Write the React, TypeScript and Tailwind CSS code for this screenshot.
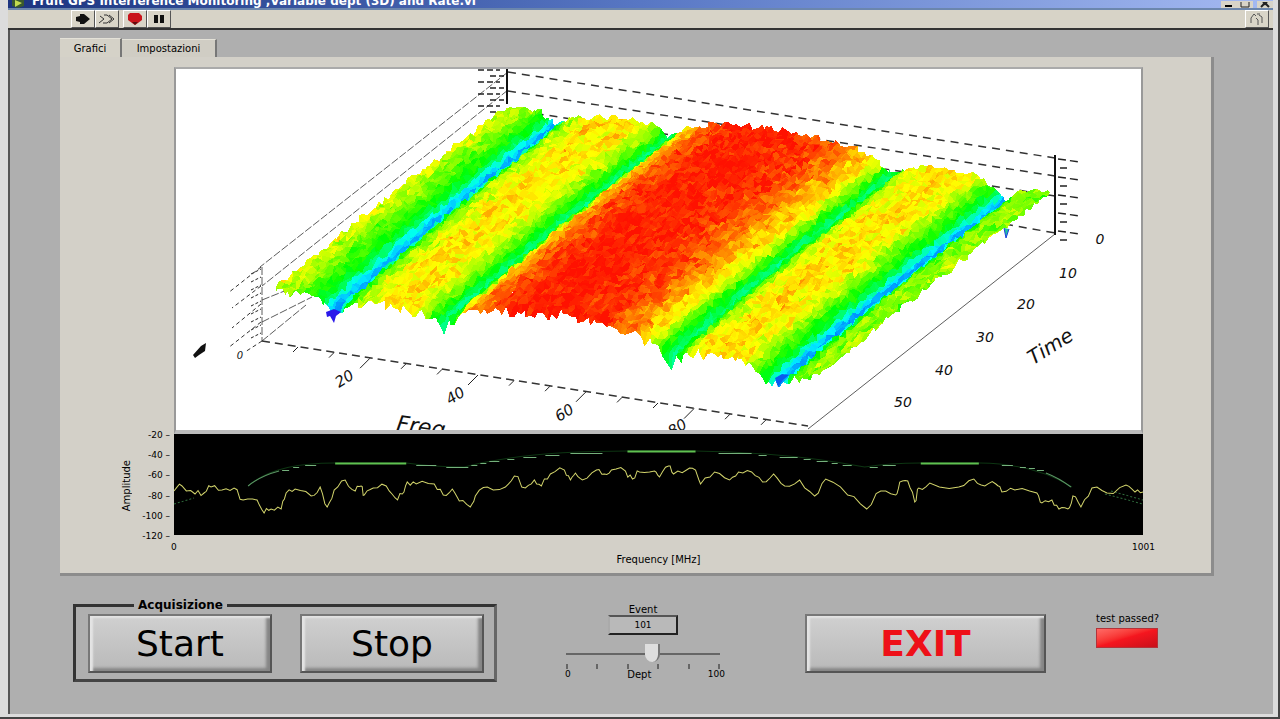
import { useState } from 'react';

type Point = [number, number];

// front x, front y, back x, back y, hue, noise
const SECTIONS: number[][] = [
  [274, 289, 508, 106, 68, 18],
  [292, 292, 528, 108, 86, 20],
  [312, 295, 540, 112, 110, 12],
  [321, 301, 547, 117, 130, 10],
  [326, 306, 551, 121, 176, 5],
  [331, 309, 554, 124, 196, 6],
  [337, 310, 558, 125, 212, 6],
  [342, 307, 562, 124, 124, 12],
  [356, 304, 572, 118, 80, 20],
  [382, 304, 600, 117, 52, 16],
  [412, 310, 640, 120, 60, 16],
  [426, 314, 657, 127, 90, 14],
  [434, 319, 664, 134, 122, 8],
  [444, 322, 670, 138, 156, 8],
  [452, 319, 676, 136, 112, 14],
  [462, 313, 688, 129, 46, 14],
  [482, 309, 710, 124, 22, 16],
  [512, 309, 740, 125, 8, 10],
  [560, 314, 780, 130, 7, 10],
  [604, 324, 824, 139, 14, 16],
  [634, 331, 858, 149, 36, 18],
  [650, 339, 876, 161, 60, 12],
  [660, 349, 886, 169, 112, 10],
  [670, 356, 893, 174, 154, 10],
  [679, 354, 902, 172, 112, 12],
  [692, 350, 914, 167, 64, 18],
  [718, 354, 945, 169, 50, 16],
  [744, 361, 976, 176, 64, 18],
  [757, 368, 989, 184, 104, 14],
  [766, 376, 996, 191, 128, 10],
  [770, 379, 1000, 196, 174, 8],
  [775, 381, 1003, 200, 196, 6],
  [781, 382, 1007, 201, 212, 6],
  [786, 380, 1010, 200, 130, 12],
  [798, 378, 1024, 190, 86, 20],
  [820, 375, 1053, 191, 88, 24],
];

const NOTCHES: Point[] = [
  [334, 8],
  [443, 6],
  [669, 8],
  [779, 5],
];

const COLUMNS = 160;
const ROWS = 70;

function createRandom(seed: number) {
  let state = seed;
  return () => {
    state = (state * 1664525 + 1013904223) % 4294967296;
    return state / 4294967296;
  };
}

function sampleSection(s: number) {
  const x = 274 + s * (820 - 274);
  let i = 0;
  while (i < SECTIONS.length - 2 && SECTIONS[i + 1][0] < x) i++;
  const a = SECTIONS[i];
  const b = SECTIONS[i + 1];
  const k = (x - a[0]) / (b[0] - a[0]);
  return a.map((value, index) => value + (b[index] - value) * k);
}

function buildSurface() {
  const random = createRandom(71);
  const grid: Point[][] = [];
  const hues: number[][] = [];

  for (let r = 0; r <= ROWS; r++) {
    const t = r / ROWS;
    const points: Point[] = [];
    const rowHues: number[] = [];
    for (let c = 0; c <= COLUMNS; c++) {
      const [fx, fy, bx, by, hue, noise] = sampleSection(c / COLUMNS);
      const edge = r === ROWS ? random() * 10 - 3 : 0;
      const notch = r === ROWS ? NOTCHES.find(([x]) => Math.abs(x - fx) < 5) : undefined;
      const x = bx + (fx - bx) * t + (random() - 0.5) * 4;
      const bow = Math.sin(Math.PI * t) * -3;
      const y = by + (fy - by) * t + bow + (random() - 0.5) * 7 + edge + (notch ? notch[1] : 0);
      points.push([Math.round(x * 10) / 10, Math.round(y * 10) / 10]);
      rowHues.push(hue + (random() + random() - 1) * noise * 1.8);
    }
    grid.push(points);
    hues.push(rowHues);
  }

  const cells: { points: string; fill: string }[] = [];
  for (let r = 0; r < ROWS; r++) {
    for (let c = 0; c < COLUMNS; c++) {
      const corners = [grid[r][c], grid[r][c + 1], grid[r + 1][c + 1], grid[r + 1][c]];
      const hue = (hues[r][c] * 2 + hues[r][c + 1] + hues[r + 1][c]) / 4;
      cells.push({
        points: corners.map((p) => p.join(',')).join(' '),
        fill: `hsl(${Math.round(Math.max(4, hue))} 100% 50%)`,
      });
    }
  }
  return cells;
}

const SURFACE = buildSurface();

const TIME_LABELS = [
  { x: 1100, y: 244, text: '0' },
  { x: 1068, y: 278, text: '10' },
  { x: 1026, y: 309, text: '20' },
  { x: 985, y: 342, text: '30' },
  { x: 944, y: 375, text: '40' },
  { x: 903, y: 407, text: '50' },
];

const FREQ_LABELS = [
  { x: 347, y: 383, text: '20' },
  { x: 458, y: 400, text: '40' },
  { x: 567, y: 417, text: '60' },
  { x: 680, y: 432, text: '80' },
];

function SurfaceChart() {
  return (
    <svg
      viewBox="176 69 965 361"
      preserveAspectRatio="none"
      className="block h-[361px] w-full bg-white"
      role="img"
      aria-label="Spectrum over time"
    >
      <g stroke="#333" strokeWidth="1" fill="none">
        <path d="M508 72L260 267M508 90L262 286M262 267V341M262 300L302 284M262 322L312 297M262 341L306 305" strokeDasharray="8 2" strokeWidth="0.8" />
        <path d="M261 267L228 293M261 286L232 308M261 304L232 328M261 322L228 348M262 341L245 352" strokeDasharray="4 3" />
        <path d="M262 341L808 426" strokeDasharray="8 5" strokeWidth="1.5" />
        <path d="M508 72L1055 158M508 91L1055 176M508 109L1055 196M1005 224L1055 233" strokeDasharray="8 6" strokeWidth="1.5" />
        <path d="M1055 234L808 429" strokeWidth="0.8" />
      </g>
      <path d="M507 69V104M1055 155V235" stroke="#111" strokeWidth="2" />
      <g stroke="#222" strokeWidth="1.5">
        {[0, 1, 2, 3, 4].map((i) => (
          <path key={i} d={`M1058 ${159 + i * 18}l22 3M1060 ${168 + i * 18}h7`} strokeDasharray="8 4" />
        ))}
        {[0, 1, 2, 3, 4, 5, 6, 7].map((i) => (
          <path key={i} d={`M${i % 2 ? 490 : 478} ${70 + i * 6}h${i % 2 ? 14 : 22}`} strokeDasharray="6 3" />
        ))}
        {[0, 1, 2, 3, 4, 5, 6, 7, 8].map((i) => (
          <path key={i} d={`M251 ${274 + i * 8}l10 -5`} strokeWidth="1" strokeDasharray="3 2" />
        ))}
        {Array.from({ length: 14 }, (_, i) => (
          <path key={i} d={`M${298 + i * 36} ${347 + i * 5.6}l${(i + 1) % 3 ? '-5 5' : '-10 10'}`} strokeWidth="1" />
        ))}
      </g>
      <g shapeRendering="crispEdges">
        {SURFACE.map((cell, i) => (
          <polygon key={i} points={cell.points} fill={cell.fill} />
        ))}
      </g>
      <path d="M326 312l1 5 3 -1 4 7 2 -7 5 -4 -7 -3z" fill="#2a18ea" />
      <path d="M775 378l3 9 5 -7 6 -5 -7 -1z" fill="#0a5cf0" />
      <path d="M1004 228l2 10 3 -9" stroke="#2040e0" strokeWidth="1" fill="#20c0a0" />
      <g fontFamily="'DejaVu Sans', sans-serif" fontStyle="italic" textAnchor="middle" fill="#111">
        {TIME_LABELS.map((label) => (
          <text key={label.text} x={label.x} y={label.y} fontSize="14">
            {label.text}
          </text>
        ))}
        {FREQ_LABELS.map((label) => (
          <text key={label.text} x={label.x} y={label.y} fontSize="15" transform={`rotate(-32 ${label.x} ${label.y})`}>
            {label.text}
          </text>
        ))}
        <text x="240" y="359" fontSize="10">0</text>
        <text x="1054" y="352" fontSize="20" transform="rotate(-32 1054 352)">Time</text>
        <text x="420" y="434" fontSize="22" transform="rotate(8 420 434)">Freq</text>
      </g>
      <path d="M193 355l8 -9 5 -3 -1 8 -6 4 -4 3z" fill="#111" />
    </svg>
  );
}

// amplitude trace, y values inside the 968 x 101 plot
const TRACE_KEYS: Point[] = [
  [0, 57], [8, 52], [21, 60], [30, 59], [37, 53], [48, 56], [60, 54], [69, 66], [83, 66], [90, 79],
  [97, 75], [107, 75], [112, 59], [121, 55], [137, 62], [146, 53], [153, 73], [160, 56], [171, 46], [181, 57],
  [187, 52], [190, 61], [199, 54], [212, 52], [221, 64], [228, 60], [233, 48], [242, 50], [260, 50], [269, 61],
  [278, 55], [285, 67], [296, 73], [301, 62], [313, 53], [331, 53], [340, 42], [351, 54], [360, 46], [367, 52],
  [376, 40], [390, 36], [396, 46], [401, 39], [408, 46], [422, 36], [430, 40], [437, 36], [451, 37], [458, 45],
  [465, 38], [480, 37], [485, 43], [494, 32], [499, 40], [512, 36], [521, 36], [526, 50], [540, 38], [555, 46],
  [564, 38], [577, 38], [588, 48], [599, 40], [610, 52], [625, 46], [640, 62], [651, 45], [673, 61], [692, 75],
  [706, 57], [721, 61], [725, 48], [733, 47], [740, 68], [744, 54], [755, 49], [784, 53], [799, 45], [810, 52],
  [821, 50], [827, 58], [840, 56], [862, 59], [867, 69], [877, 66], [884, 75], [893, 75], [898, 62], [906, 73],
  [917, 54], [932, 59], [951, 51], [960, 58], [968, 58],
];

function buildTrace() {
  const random = createRandom(19);
  const parts: string[] = [];
  TRACE_KEYS.forEach(([x, y], i) => {
    parts.push(`${i ? 'L' : 'M'}${x} ${y}`);
    const next = TRACE_KEYS[i + 1];
    if (!next) return;
    [0.33, 0.67].forEach((k) => {
      const px = x + (next[0] - x) * k;
      const py = y + (next[1] - y) * k + (random() - 0.5) * 7;
      parts.push(`L${px.toFixed(1)} ${py.toFixed(1)}`);
    });
  });
  return parts.join('');
}

const TRACE = buildTrace();

// limit mask: x, y, length of each flat piece
const MASK_DASHES: number[][] = [
  [108, 36, 7], [119, 33, 6], [131, 31, 11], [242, 31, 20], [272, 33, 22], [297, 31, 6], [306, 29, 6],
  [315, 27, 10], [333, 25, 7], [349, 23, 13], [371, 21, 14], [396, 19, 32], [544, 19, 33], [584, 21, 8],
  [605, 23, 18], [629, 25, 7], [642, 27, 11], [657, 29, 6], [668, 31, 9], [695, 33, 8], [708, 31, 13],
  [827, 31, 11], [845, 33, 6], [854, 34, 6], [862, 36, 7],
];

function AmplitudeChart() {
  return (
    <svg viewBox="0 0 968 101" preserveAspectRatio="none" className="block h-[101px] w-full bg-black" role="img" aria-label="Amplitude">
      <path
        d="M74 52Q100 29 160 29H232Q260 33 290 33Q350 17 453 17H521Q610 18 690 33Q715 29 746 29H805Q860 30 897 53"
        fill="none"
        stroke="#0d3512"
        strokeWidth="1"
      />
      <path d="M74 52Q86 42 105 37M871 39Q884 44 896 53" fill="none" stroke="#5a9463" />
      {MASK_DASHES.map(([x, y, length]) => (
        <path key={x} d={`M${x} ${y + 0.5}h${length}`} stroke="#75b07c" />
      ))}
      <path d="M161 29.500H232M453 17.500H521M746 29.500H804" stroke="#5fc050" strokeWidth="2" />
      <path d="M0 70L20 64M930 60L968 70M936 57L968 66" stroke="#2f6b3c" strokeDasharray="2 2" />
      <path d={TRACE} fill="none" stroke="#d3d56c" strokeWidth="1" />
    </svg>
  );
}

const TOOL_BUTTON =
  'flex h-[18px] w-6 items-center justify-center border border-t-white border-l-white border-r-[#555] border-b-[#555] bg-[#d9d5c8]';

function Toolbar() {
  return (
    <div className="flex h-[20px] items-center justify-between border-b-2 border-[#333] bg-[#d7d3c7] pr-1 pl-[63px]">
      <div className="flex items-center">
        <button type="button" aria-label="Run" className={TOOL_BUTTON}>
          <svg viewBox="0 0 16 12" className="h-3 w-4">
            <path d="M1 4l4-1V1h4l6 5-6 5H5V9L1 8z" fill="#111" />
          </svg>
        </button>
        <button type="button" aria-label="Run continuously" className={TOOL_BUTTON}>
          <svg viewBox="0 0 18 12" className="h-3 w-[18px]" fill="none" stroke="#333">
            <path d="M2 3l4 3-5 4M6 2h3l5 4-5 4H5M11 2l5 4-5 4" />
          </svg>
        </button>
        <button type="button" aria-label="Abort" className={`${TOOL_BUTTON} ml-1`}>
          <svg viewBox="0 0 16 12" className="h-3 w-4">
            <path d="M3 0h9l3 3v4l-4 3-3 2-3-2-4-3V2z" fill="#c9141b" />
            <path d="M5 9l3 3 3-3z" fill="#5c1010" />
          </svg>
        </button>
        <button type="button" aria-label="Pause" className={TOOL_BUTTON}>
          <svg viewBox="0 0 12 10" className="h-[10px] w-3">
            <path d="M1 1h4v8H1zM7 1h4v8H7z" fill="#111" />
          </svg>
        </button>
      </div>
      <button type="button" aria-label="VI icon" className={TOOL_BUTTON}>
        <svg viewBox="0 0 16 14" className="h-[14px] w-4" fill="none" stroke="#555">
          <path d="M2 11V6l3-4 2 2M10 3l3 2v6M7 6l2 2v5M8 2h3" />
        </svg>
      </button>
    </div>
  );
}

interface PanelButtonProps {
  label: string;
  className: string;
  onClick?: () => void;
}

function PanelButton({ label, className, onClick }: PanelButtonProps) {
  return (
    <button
      type="button"
      onClick={onClick}
      className={`flex h-[59px] items-center justify-center border-2 border-t-[#777] border-l-[#777] border-r-[#555] border-b-[#555] bg-linear-to-b from-[#d0d0d0] to-[#b9b9b9] shadow-[inset_3px_2px_2px_#e4e4e4,inset_-4px_-3px_3px_#858585] ${className}`}
    >
      {label}
    </button>
  );
}

export default function App() {
  const [tab, setTab] = useState('Grafici');
  const [depth, setDepth] = useState(57);

  return (
    <div className="flex min-h-screen flex-col border-r-2 border-b-2 border-[#444] bg-[#dcdcdc] pr-[5px] pb-[3px] pl-[8px] font-['DejaVu_Sans',sans-serif] text-black">
      <header className="flex h-[10px] items-end justify-between overflow-hidden border-b-2 border-[#6b86ad] bg-linear-to-r from-[#1c3480] via-[#5877c4] to-[#a5baf2]">
        <div className="flex items-end gap-2 pl-1">
          <svg viewBox="0 0 12 8" className="h-2 w-3">
            <path d="M0 0h12v6L6 8 0 6z" fill="#3a5a30" />
            <path d="M3 0l7 3-7 4z" fill="#c4dc50" />
          </svg>
          <h1 className="text-[12px] leading-[14px] font-bold whitespace-nowrap text-white">
            Fruit GPS Interference Monitoring ,Variable dept (3D) and Rate.vi
          </h1>
        </div>
        <div className="flex h-[7px] items-end text-[#222]">
          <button type="button" aria-label="Minimize" className="flex h-[7px] w-4 items-end justify-center bg-[#d8d4c8]">
            <svg viewBox="0 0 10 6" className="h-[6px] w-[10px]"><path d="M1 3h7v2H1z" /></svg>
          </button>
          <button type="button" aria-label="Restore" className="flex h-[7px] w-4 items-end justify-center bg-[#d8d4c8]">
            <svg viewBox="0 0 10 6" className="h-[6px] w-[10px]"><path d="M1 0v5h8V0" fill="none" stroke="#222" /></svg>
          </button>
          <button type="button" aria-label="Close" className="ml-1 flex h-[7px] w-4 items-end justify-center bg-[#d8d4c8]">
            <svg viewBox="0 0 10 6" className="h-[6px] w-[10px]"><path d="M1 5l4-4 4 4M3 0l2 2 2-2" fill="none" stroke="#222" strokeWidth="2" /></svg>
          </button>
        </div>
      </header>
      <Toolbar />

      <main className="flex grow flex-col border-l-2 border-[#555] bg-[#afafaf] pt-[8px] pr-[59px] pl-[50px]">
        <div role="tablist" className="flex h-[19px] items-end">
          <button
            type="button"
            role="tab"
            aria-selected={tab === 'Grafici'}
            onClick={() => setTab('Grafici')}
            className="h-[19px] w-[62px] border-t border-r-2 border-t-[#e4e2d8] border-r-[#777] bg-[#d5d2c8] text-[10px]"
          >
            Grafici
          </button>
          <button
            type="button"
            role="tab"
            aria-selected={tab === 'Impostazioni'}
            onClick={() => setTab('Impostazioni')}
            className="h-[18px] w-[95px] border-t border-r-2 border-t-[#e4e2d8] border-r-[#777] bg-[#d0cdc4] text-[10px]"
          >
            Impostazioni
          </button>
        </div>

        <section className="border-r-[3px] border-b-[3px] border-[#8c8c8c] bg-[#d3d0c8] pt-[10px] pr-[68px]">
          <div className="ml-[114px] border-2 border-b-4 border-t-[#aaa] border-r-[#999] border-b-[#bbb] border-l-[#999]">
            <SurfaceChart />
          </div>
          <div className="flex text-[9px] leading-[10px]">
            <div className="flex w-[114px] items-center justify-end">
              <span className="rotate-180 text-[10px] [writing-mode:vertical-rl]">Amplitude</span>
              <div className="-my-1 flex h-[111px] w-[42px] flex-col justify-between pr-1 text-right">
                <span>-20 –</span>
                <span>-40 –</span>
                <span>-60 –</span>
                <span>-80 –</span>
                <span>-100 –</span>
                <span>-120 –</span>
              </div>
            </div>
            <div className="grow">
              <AmplitudeChart />
            </div>
          </div>
          <div className="-mr-3 ml-[111px] flex justify-between pt-[5px] text-[9px] leading-[10px]">
            <span>0</span>
            <span>1001</span>
          </div>
          <p className="ml-[114px] pt-[2px] pb-[8px] text-center text-[10px] leading-[11px]">Frequency [MHz]</p>
        </section>

        <div className="flex items-start pt-[23px] pl-[13px]">
          <fieldset className="flex h-[83px] w-[424px] gap-[28px] border-[3px] border-t-[#333] border-r-[#666] border-b-[#444] border-l-[#333] pt-[3px] pl-[12px]">
            <legend className="ml-[46px] px-1 text-[12px] leading-[12px] font-bold">Acquisizione</legend>
            <PanelButton label="Start" className="w-[184px] text-[36px]" />
            <PanelButton label="Stop" className="w-[184px] text-[36px]" />
          </fieldset>

          <div className="ml-[60px] flex w-[172px] flex-col items-center pt-[5px] text-[10px] leading-[11px]">
            <label htmlFor="event">Event</label>
            <input
              id="event"
              readOnly
              value="101"
              className="h-[20px] w-[70px] border-2 border-t-[#555] border-r-[#222] border-b-[#222] border-l-[#aaa] bg-[#b9b9b9] text-center text-[9px]"
            />
            <input
              type="range"
              min={0}
              max={100}
              value={depth}
              id="depth"
              onChange={(e) => setDepth(Number(e.target.value))}
              className="mt-[9px] h-[20px] w-[154px] appearance-none bg-transparent [&::-webkit-slider-runnable-track]:h-[2px] [&::-webkit-slider-runnable-track]:bg-[#666] [&::-webkit-slider-thumb]:-mt-[9px] [&::-webkit-slider-thumb]:h-[18px] [&::-webkit-slider-thumb]:w-[15px] [&::-webkit-slider-thumb]:appearance-none [&::-webkit-slider-thumb]:rounded-b-full [&::-webkit-slider-thumb]:border-r-2 [&::-webkit-slider-thumb]:border-[#777] [&::-webkit-slider-thumb]:bg-[#dedede]"
            />
            <div className="flex w-[154px] justify-between">
              {[0, 20, 40, 60, 80, 100].map((tick) => (
                <span key={tick} className="h-[5px] w-[2px] bg-[#666]" />
              ))}
            </div>
            <div className="flex w-[164px] items-start justify-between text-[9px]">
              <span className="pl-1">0</span>
              <label htmlFor="depth" className="text-[10px]">Dept</label>
              <span>100</span>
            </div>
          </div>

          <PanelButton label="EXIT" className="mt-[15px] ml-[76px] w-[241px] text-[36px] font-bold text-[#ee1018]" />

          <div className="ml-[50px] pt-[14px]">
            <p className="text-[10px] leading-[11px] whitespace-nowrap">test passed?</p>
            <div className="mt-1 h-[20px] w-[62px] border border-[#b3333a] bg-linear-to-br from-[#ff6a66] via-[#f5161f] to-[#c8101a]" />
          </div>
        </div>
      </main>
    </div>
  );
}
